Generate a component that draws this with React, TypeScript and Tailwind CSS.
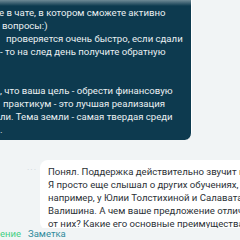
const darkLines: { text: string; indent: string }[] = [
  { text: "е в чате, в котором сможете активно", indent: "pl-0" },
  { text: "вопросы:)", indent: "pl-[3px]" },
  { text: "проверяется очень быстро, если сдали", indent: "pl-[7px]" },
  { text: "- то на след день получите обратную", indent: "pl-[1px]" },
  { text: "", indent: "pl-0" },
  { text: "", indent: "pl-0" },
  { text: ", что ваша цель - обрести финансовую", indent: "pl-[1px]" },
  { text: "практикум - это лучшая реализация", indent: "pl-[4px]" },
  { text: "ли. Тема земли - самая твердая среди", indent: "pl-[1px]" },
  { text: ".", indent: "pl-[1px]" },
];

const replyLines = [
  "Понял. Поддержка действительно звучит нужной.",
  "Я просто еще слышал о других обучениях,",
  "например, у Юлии Толстихиной и Салавата",
  "Валишина. А чем ваше предложение отличается",
  "от них? Какие его основные преимущества?",
];

export default function App() {
  return (
    <div className="flex h-[240px] w-[240px] flex-col overflow-hidden bg-[#f1f4f5] font-['Roboto',sans-serif]">
      <div className="flex h-[228px] shrink-0 flex-col overflow-hidden">
        <div className="relative -ml-[1px] w-[193px] shrink-0 rounded-br-[7px] border-r border-white bg-[#0d3a4f] pb-[4px] pt-[6px] text-[9.6px] leading-[13px] text-[#eaf0f2]">
          <div className="pointer-events-none absolute inset-x-0 top-0 h-[6px] bg-gradient-to-b from-[#6f8a96] to-transparent" />
          {darkLines.map((line, i) => (
            <div key={i} className={`h-[13px] overflow-hidden whitespace-nowrap ${line.indent}`}>
              {line.text}
            </div>
          ))}
        </div>

        <div className="mt-[20px] flex items-start">
          <span className="ml-[27px] mt-[5px] w-[13px] text-[9px] leading-[10px] tracking-[1px] text-[#ccd2d6]">···</span>
          <div className="min-w-0 flex-1 rounded-l-[8px] bg-white pl-[8px] pt-[5px] text-[9.6px] leading-[13px] text-[#2b3136]">
            {replyLines.map((line, i) => (
              <div key={i} className="h-[13px] overflow-hidden whitespace-nowrap">
                {line}
              </div>
            ))}
          </div>
        </div>
      </div>

      <div className="flex h-[12px] items-center gap-[7px] text-[9.5px] leading-[12px]">
        <span className="text-[#43cf84]">ение</span>
        <span className="text-[#2f8b9c]">Заметка</span>
      </div>
    </div>
  );
}
